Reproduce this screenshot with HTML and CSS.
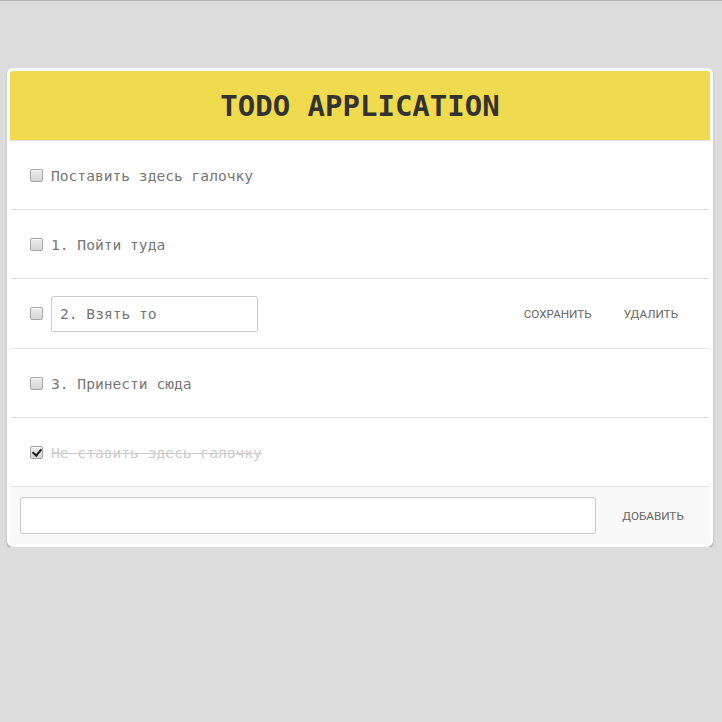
FILE: index.html
```html
<!DOCTYPE html>
<html lang="ru">
<head>
<meta charset="utf-8">
<title>Todo</title>
<link rel="stylesheet" href="styles.css">
</head>
<body>
<div class="app">
  <header class="app-header"><h1>TODO APPLICATION</h1></header>
  <ul class="todo-list">
    <li class="todo"><input type="checkbox" class="check"><span class="label">Поставить здесь галочку</span></li>
    <li class="todo"><input type="checkbox" class="check"><span class="label">1. Пойти туда</span></li>
    <li class="todo editing"><input type="checkbox" class="check"><input type="text" class="edit-field" value="2. Взять то"><span class="spacer"></span><button class="btn">Сохранить</button><button class="btn">Удалить</button></li>
    <li class="todo"><input type="checkbox" class="check"><span class="label">3. Принести сюда</span></li>
    <li class="todo done"><input type="checkbox" class="check" checked><span class="label">Не ставить здесь галочку</span></li>
  </ul>
  <form class="add-form">
    <input type="text" class="add-field">
    <button type="button" class="btn add-btn">Добавить</button>
  </form>
</div>
</body>
</html>
```
FILE: styles.css
```css
html, body { margin: 0; padding: 0; }
body {
  background: #dbdcdb;
  border-top: 1px solid #b3b1b1;
  padding-top: 67px;
  font-family: "DejaVu Sans Mono", monospace;
}
.app {
  width: 700px;
  margin: 0 0 0 7px;
  border: 3px solid #fff;
  border-radius: 6px;
  background: #fff;
  box-shadow: 0 2px 2px rgba(0,0,0,0.28);
  overflow: hidden;
}
.app-header {
  background: #f0da4d;
  height: 69px;
  display: flex;
  align-items: center;
  justify-content: center;
  border-bottom: 1px solid #e4e4e4;
}
.app-header h1 {
  margin: 0;
  font-family: "DejaVu Sans Mono", monospace;
  font-weight: bold;
  font-size: 29px;
  color: #333;
}
.todo-list { list-style: none; margin: 0; padding: 0; }
.todo {
  height: 68px;
  border-bottom: 1px solid #e4e4e4;
  display: flex;
  align-items: center;
  padding: 0 16px 0 20px;
}
.todo.editing { height: 69px; }
.check {
  -webkit-appearance: none;
  appearance: none;
  position: relative;
  box-sizing: border-box;
  width: 13px;
  height: 13px;
  margin: 0 8px 0 0;
  border: 1px solid #a6a6a6;
  border-radius: 2px;
  background: linear-gradient(#ececec, #d6d6d6);
  box-shadow: inset 0 1px 1px rgba(255,255,255,0.8);
}
.check:checked::after {
  content: "";
  position: absolute;
  left: 3px;
  top: 0px;
  width: 4px;
  height: 7px;
  border: solid #222;
  border-width: 0 2px 2px 0;
  transform: rotate(40deg);
}
.label {
  font-size: 14.6px;
  color: #777;
}
.done .label {
  color: #ccc;
  text-decoration: line-through;
}
.edit-field {
  width: 207px;
  height: 36px;
  box-sizing: border-box;
  border: 1px solid #ccc;
  border-radius: 2px;
  padding: 0 8px;
  font-family: "DejaVu Sans Mono", monospace;
  font-size: 14.6px;
  color: #777;
  outline: none;
}
.spacer { flex: 1; }
.btn {
  background: none;
  border: none;
  font-family: Roboto, "Open Sans", sans-serif;
  font-size: 11.7px;
  color: #666;
  text-transform: uppercase;
  padding: 0 16px;
  height: 36px;
  cursor: pointer;
}
.add-form {
  display: flex;
  align-items: center;
  background: #f9f9f9;
  padding: 10px 0 10px 10px;
  margin: 0;
}
.add-field {
  flex: 1;
  height: 37px;
  box-sizing: border-box;
  border: 1px solid #ccc;
  border-radius: 2px;
  background: #fff;
  outline: none;
}
.add-btn {
  width: 114px;
  padding: 0;
}
```
